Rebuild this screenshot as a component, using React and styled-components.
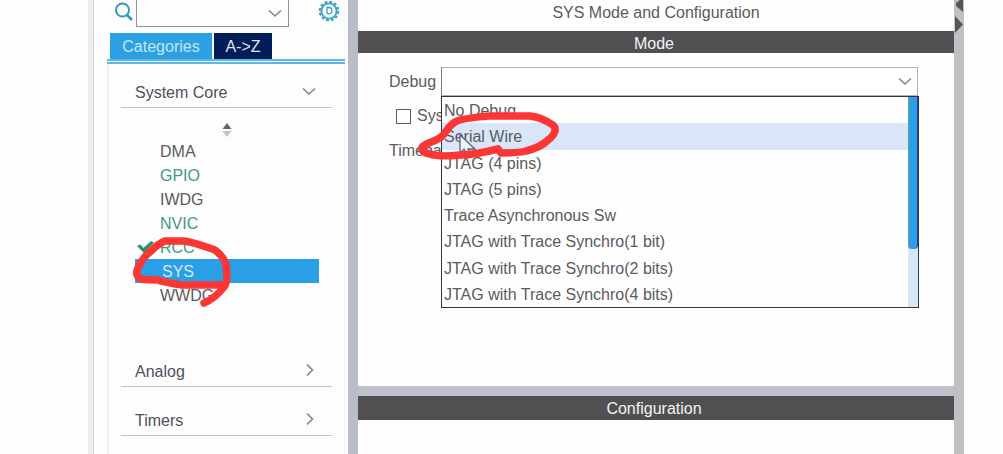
import React from "react";
import styled, { createGlobalStyle } from "styled-components";

const GlobalStyle = createGlobalStyle`
  *, *::before, *::after { box-sizing: border-box; }
  body {
    margin: 0;
    background: #fdfdfd;
    color: #5c5a60;
    font: 16px/24px "Liberation Sans", Arial, sans-serif;
    overflow: hidden;
  }
  button, input, select { font: inherit; color: inherit; }
`;

const Page = styled.div`
  position: relative;
  display: flex;
  min-height: 100vh;
`;

const Gutter = styled.div`
  flex: none;
  width: ${(p) => p.$width}px;
`;

const Rail = styled.div`
  flex: none;
  width: 6px;
  background: #ececec;
  border-right: 1px solid #d6d6d6;
`;

const Splitter = styled.div`
  flex: none;
  width: 10px;
  background: ${(p) => p.$color};
`;

const HSplitter = styled.div`
  height: 10px;
  background: #c0c0cc;
`;

const SplitArrows = styled.svg`
  display: block;
  width: 10px;
  height: 34px;
`;

const Sidebar = styled.aside`
  flex: none;
  display: flex;
  flex-direction: column;
  width: 254px;
  padding: 0 3px 0 13px;
`;

const SearchRow = styled.div`
  display: flex;
  align-items: flex-start;
  height: 33px;
  padding: 0 5px 0 7px;
`;

const SearchIcon = styled.svg`
  flex: none;
  width: 20px;
  height: 22px;
  margin-right: 2px;
`;

const SearchBox = styled.div`
  display: flex;
  align-items: center;
  width: 153px;
  height: 27px;
  border: 1px solid #929292;
  border-top: 0;
`;

const SearchInput = styled.input`
  flex: 1;
  min-width: 0;
  border: 0;
  outline: 0;
  background: none;
`;

const IconButton = styled.button`
  display: flex;
  border: 0;
  padding: 0;
  background: none;
`;

const DropButton = styled(IconButton)`
  margin-right: 6px;
`;

const GearButton = styled(IconButton)`
  margin-left: auto;
`;

const Tabs = styled.div`
  display: flex;
  gap: 2px;
  padding-left: 3px;
`;

const Tab = styled.button`
  width: ${(p) => p.$width}px;
  height: 26px;
  padding: 2px 0 0;
  border: 0;
  background: ${(p) => (p.$active ? "#2ba0e2" : "#031d58")};
  color: ${(p) => (p.$active ? "#c4e6fa" : "#dfe6f2")};
`;

const TabPanel = styled.div`
  flex: 1;
  border-top: 5px double #5cb8e4;
  box-shadow: inset 2px 0 #efefef, inset -1px 0 #f0f0f0;
  padding: 13px 13px 0 14px;
`;

const GroupHeader = styled.button`
  display: flex;
  align-items: center;
  justify-content: space-between;
  width: 100%;
  height: 31px;
  margin-bottom: ${(p) => p.$gap}px;
  padding: 2px 16px 0 14px;
  border: 0;
  border-bottom: 1px solid #c2c2c2;
  background: none;
  color: #504f5c;
`;

const HeaderChevron = styled.span`
  display: flex;
  padding-bottom: 4px;
`;

const SortHandle = styled.svg`
  display: block;
  width: 10px;
  height: 14px;
  margin: 0 auto;
`;

const Peripherals = styled.ul`
  list-style: none;
  margin: 2px 13px 49px 14px;
  padding: 0;
`;

const Peripheral = styled.li`
  position: relative;
  height: 24px;
  padding-left: ${(p) => (p.$selected ? 27 : 25)}px;
  line-height: 26px;
  background: ${(p) => (p.$selected ? "#2b9fe6" : "none")};
  color: ${(p) => (p.$selected ? "#d4ecfb" : p.$on ? "#3f9c7c" : "#5c5a60")};
`;

const Check = styled.svg`
  position: absolute;
  left: 2px;
  top: 5px;
  width: 17px;
  height: 14px;
`;

const Main = styled.main`
  flex: 1;
  min-width: 0;
  background: #fefefe;
`;

const Title = styled.h1`
  margin: 0;
  height: 31px;
  font-size: 16px;
  font-weight: 400;
  line-height: 25px;
  text-align: center;
`;

const SectionBar = styled.h2`
  margin: 0;
  height: ${(p) => p.$height}px;
  padding-right: 4px;
  background: #504f52;
  color: #f4f4f4;
  font-size: 16px;
  font-weight: 400;
  line-height: 25px;
  text-align: center;
`;

const ModePane = styled.section`
  min-height: 333px;
  padding: 14px 36px 0 31px;
`;

const Field = styled.div`
  display: flex;
  align-items: center;
`;

const FieldLabel = styled.label`
  flex: none;
  width: ${(p) => p.$width || "auto"};
`;

const Combo = styled.div`
  position: relative;
  flex: 1;
`;

const Select = styled.select`
  display: block;
  appearance: none;
  width: 100%;
  height: 29px;
  padding: 0 4px;
  border: 1px solid #b0b0b0;
  border-left-color: #777;
  border-radius: 0;
  background: #fff;
`;

const ComboChevron = styled.div`
  position: absolute;
  right: 6px;
  top: 7px;
  display: flex;
  pointer-events: none;
`;

const Popup = styled.div`
  position: absolute;
  z-index: 1;
  top: 100%;
  left: 0;
  right: -1px;
  display: flex;
  height: 212px;
  border: 1px solid #33333b;
  background: #fefefe;
`;

const Options = styled.ul`
  flex: 1;
  display: grid;
  grid-auto-rows: 1fr;
  list-style: none;
  margin: 0;
  padding: 0;
`;

const Option = styled.li`
  padding: 2px 0 0 2px;
  line-height: 24px;
  background: ${(p) => (p.$hover ? "#d9e6f8" : "none")};
`;

const Scrollbar = styled.div`
  width: 10px;
  background: #d5e6f7;
`;

const Thumb = styled.div`
  height: 152px;
  border-left: 1px solid #6d9f9d;
  border-right: 1px solid #2c3fae;
  border-radius: 0 0 4px 4px;
  background: #2a9fe8;
`;

const CheckField = styled.div`
  display: flex;
  align-items: center;
  gap: 6px;
  margin: 8px 0 11px 7px;
`;

const Checkbox = styled.input`
  appearance: none;
  width: 15px;
  height: 15px;
  margin: 0;
  border: 1px solid #5c5c5c;
  background: #fff;
`;

const Annotation = styled.svg`
  position: absolute;
  z-index: 2;
  left: ${(p) => p.$x}px;
  top: ${(p) => p.$y}px;
  overflow: visible;
  pointer-events: none;
`;

const Chevron = ({ right }) => (
  <svg width="14" height="14" viewBox="0 0 14 14" fill="none" stroke="#85858b" strokeWidth="1.6">
    <path d={right ? "M5 1.5L10.5 7L5 12.5" : "M1 4.5L7 10L13 4.5"} />
  </svg>
);

const Gear = () => (
  <svg width="22" height="22" viewBox="0 0 22 22" fill="none" stroke="#3ba3c6">
    <circle cx="11" cy="11" r="9.3" strokeWidth="2" strokeDasharray="2.9 1.97" />
    <circle cx="11" cy="11" r="7.6" strokeWidth="1.8" />
    <path d="M9 7.5V13a3 3 0 0 0 5-2.3A3.2 3.2 0 0 0 11 7.5Z" strokeWidth="1.3" />
  </svg>
);

const peripherals = [
  { name: "DMA" },
  { name: "GPIO", on: true },
  { name: "IWDG" },
  { name: "NVIC", on: true },
  { name: "RCC", on: true, checked: true },
  { name: "SYS", selected: true },
  { name: "WWDG" },
];

const debugOptions = [
  "No Debug",
  "Serial Wire",
  "JTAG (4 pins)",
  "JTAG (5 pins)",
  "Trace Asynchronous Sw",
  "JTAG with Trace Synchro(1 bit)",
  "JTAG with Trace Synchro(2 bits)",
  "JTAG with Trace Synchro(4 bits)",
];

export default function App() {
  return (
    <>
      <GlobalStyle />
      <Page>
        <Gutter $width={88} />
        <Rail />
        <Sidebar>
          <SearchRow>
            <SearchIcon viewBox="0 0 20 22" fill="none" stroke="#3498b8" strokeWidth="2">
              <circle cx="8.5" cy="10" r="6.5" />
              <path d="M13 15L18 20" strokeWidth="2.5" />
            </SearchIcon>
            <SearchBox>
              <SearchInput type="text" aria-label="Search" />
              <DropButton aria-label="Show recent searches"><Chevron /></DropButton>
            </SearchBox>
            <GearButton aria-label="Settings"><Gear /></GearButton>
          </SearchRow>
          <Tabs role="tablist">
            <Tab role="tab" aria-selected="true" $active $width={102}>Categories</Tab>
            <Tab role="tab" aria-selected="false" $width={58}>{"A->Z"}</Tab>
          </Tabs>
          <TabPanel role="tabpanel">
            <GroupHeader $gap={15} aria-expanded="true">
              System Core<HeaderChevron><Chevron /></HeaderChevron>
            </GroupHeader>
            <SortHandle viewBox="0 0 10 14">
              <path d="M5 0L9.5 6H.5Z" fill="#66666a" />
              <path d="M.5 8H9.5L5 14Z" fill="#c4c4c4" />
            </SortHandle>
            <Peripherals>
              {peripherals.map((p) => (
                <Peripheral key={p.name} $on={p.on} $selected={p.selected}>
                  {p.checked && (
                    <Check viewBox="0 0 17 14">
                      <path d="M0 6L3.5 4.5L6.5 8L14 1L17 2.5L7 13Z" fill="#2f8f6b" />
                    </Check>
                  )}
                  {p.name}
                </Peripheral>
              ))}
            </Peripherals>
            <GroupHeader $gap={18} aria-expanded="false">
              Analog<HeaderChevron><Chevron right /></HeaderChevron>
            </GroupHeader>
            <GroupHeader $gap={0} aria-expanded="false">
              Timers<HeaderChevron><Chevron right /></HeaderChevron>
            </GroupHeader>
          </TabPanel>
        </Sidebar>
        <Splitter $color="#b9bdc9" />
        <Main>
          <Title>SYS Mode and Configuration</Title>
          <SectionBar $height={22}>Mode</SectionBar>
          <ModePane>
            <Field>
              <FieldLabel htmlFor="debug" $width="52px">Debug</FieldLabel>
              <Combo>
                <Select id="debug" defaultValue="">
                  <option value="" />
                  {debugOptions.map((o) => <option key={o}>{o}</option>)}
                </Select>
                <ComboChevron><Chevron /></ComboChevron>
                <Popup>
                  <Options role="listbox" aria-label="Debug">
                    {debugOptions.map((o, i) => (
                      <Option key={o} role="option" aria-selected={i === 1} $hover={i === 1}>{o}</Option>
                    ))}
                  </Options>
                  <Scrollbar><Thumb /></Scrollbar>
                </Popup>
              </Combo>
            </Field>
            <CheckField>
              <Checkbox type="checkbox" id="wakeup" />
              <FieldLabel htmlFor="wakeup">Sys</FieldLabel>
            </CheckField>
            <Field>
              <span>Timeba</span>
            </Field>
          </ModePane>
          <HSplitter />
          <SectionBar $height={24}>Configuration</SectionBar>
        </Main>
        <Splitter $color="#bfbfc4">
          <SplitArrows viewBox="0 0 10 34" fill="#55555a">
            <path d="M9 0V12L2 6V3L6 0Z" />
            <path d="M1 16V33L9 24.5Z" />
          </SplitArrows>
        </Splitter>
        <Gutter $width={39} />

        <Annotation $x={459} $y={134} width="18" height="22" viewBox="0 0 18 22">
          <path d="M1 1V19L5 15L8 21L11 20L9 15H16Z" fill="#f0f5fd" stroke="#5b6273" strokeWidth="1.3" />
        </Annotation>
        <Annotation
          $x={0} $y={0} width="600" height="320" viewBox="0 0 600 320"
          fill="none" stroke="#fc3535" strokeWidth="7.5" strokeLinecap="round" strokeLinejoin="round"
        >
          <path d="M204 303C214 299 220 292 224 287C228 282 227 271 226 264C224 258 220 254 215 250C206 247 194 242 184 241H165C160 243 155 247 151 251C146 255 141 261 139 266C136 271 136 275 139 278C144 281 151 279 158 280C166 283 174 283 181 285H220" />
          <path d="M498 149L501 153C510 153 519 153 526 151C534 149 543 145 548 140C555 135 557 129 553 125C547 121 539 117 530 116H490C477 117 462 118 455 122C448 126 447 132 441 137C436 141 429 142 423 146C419 149 424 153 430 154C438 157 450 156 460 155C474 155 486 152 498 149" />
        </Annotation>
      </Page>
    </>
  );
}
